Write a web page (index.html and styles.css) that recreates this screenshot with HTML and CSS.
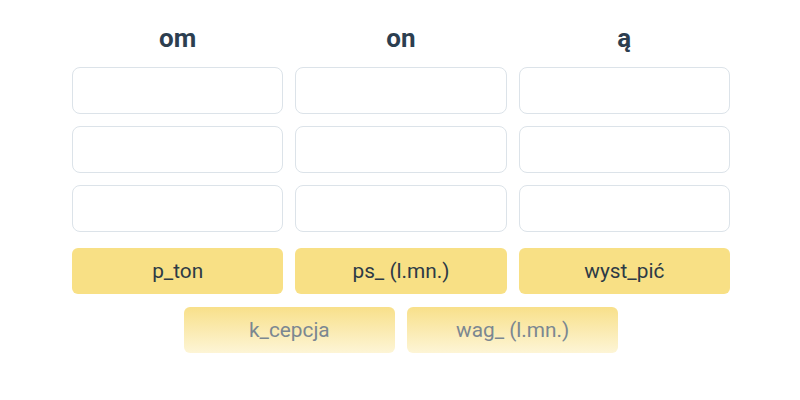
FILE: index.html
```html
<!DOCTYPE html>
<html lang="pl">
<head>
  <meta charset="UTF-8" />
  <title>Uzupełnij końcówki</title>
  <link rel="stylesheet" href="styles.css">
</head>
<body>
  <main class="board">
    <div class="columns">
      <section class="column">
        <h2>om</h2>
        <div class="slot"></div>
        <div class="slot"></div>
        <div class="slot"></div>
      </section>
      <section class="column">
        <h2>on</h2>
        <div class="slot"></div>
        <div class="slot"></div>
        <div class="slot"></div>
      </section>
      <section class="column">
        <h2>ą</h2>
        <div class="slot"></div>
        <div class="slot"></div>
        <div class="slot"></div>
      </section>
    </div>

    <div class="words">
      <div class="word">p_ton</div>
      <div class="word">ps_ (l.mn.)</div>
      <div class="word">wyst_pić</div>
      <div class="word faded">k_cepcja</div>
      <div class="word faded">wag_ (l.mn.)</div>
    </div>
  </main>
</body>
</html>
```

FILE: styles.css
```css
* {margin: 0; padding: 0; box-sizing: border-box;}
body {
  font-family: Roboto, 'Liberation Sans', sans-serif;
  background: #fff;
  color: #2d3b4a;
}
.board {
  width: 658px;
  margin-left: 72px;
  padding-top: 22px;
}
.columns {
  display: grid;
  grid-template-columns: repeat(3, 1fr);
  gap: 12px;
}
.column {
  display: flex;
  flex-direction: column;
  gap: 12px;
}
.column h2 {
  text-align: center;
  font-size: 26px;
  font-weight: 700;
  line-height: 33px;
  color: #2c3e50;
}
.slot {
  height: 47px;
  border: 1px solid #dce3e9;
  border-radius: 8px;
  background: #fff;
}
.words {
  display: flex;
  flex-wrap: wrap;
  justify-content: center;
  gap: 13px 12px;
  margin-top: 16px;
}
.word {
  width: calc((100% - 24px) / 3);
  height: 46px;
  display: flex;
  align-items: center;
  justify-content: center;
  background: #f8e085;
  border-radius: 6px;
  font-size: 20.8px;
  color: #2d3a45;
}
.word.faded {
  background: linear-gradient(#f8e08a, #fdf5d6);
  color: #7b8791;
}
```
